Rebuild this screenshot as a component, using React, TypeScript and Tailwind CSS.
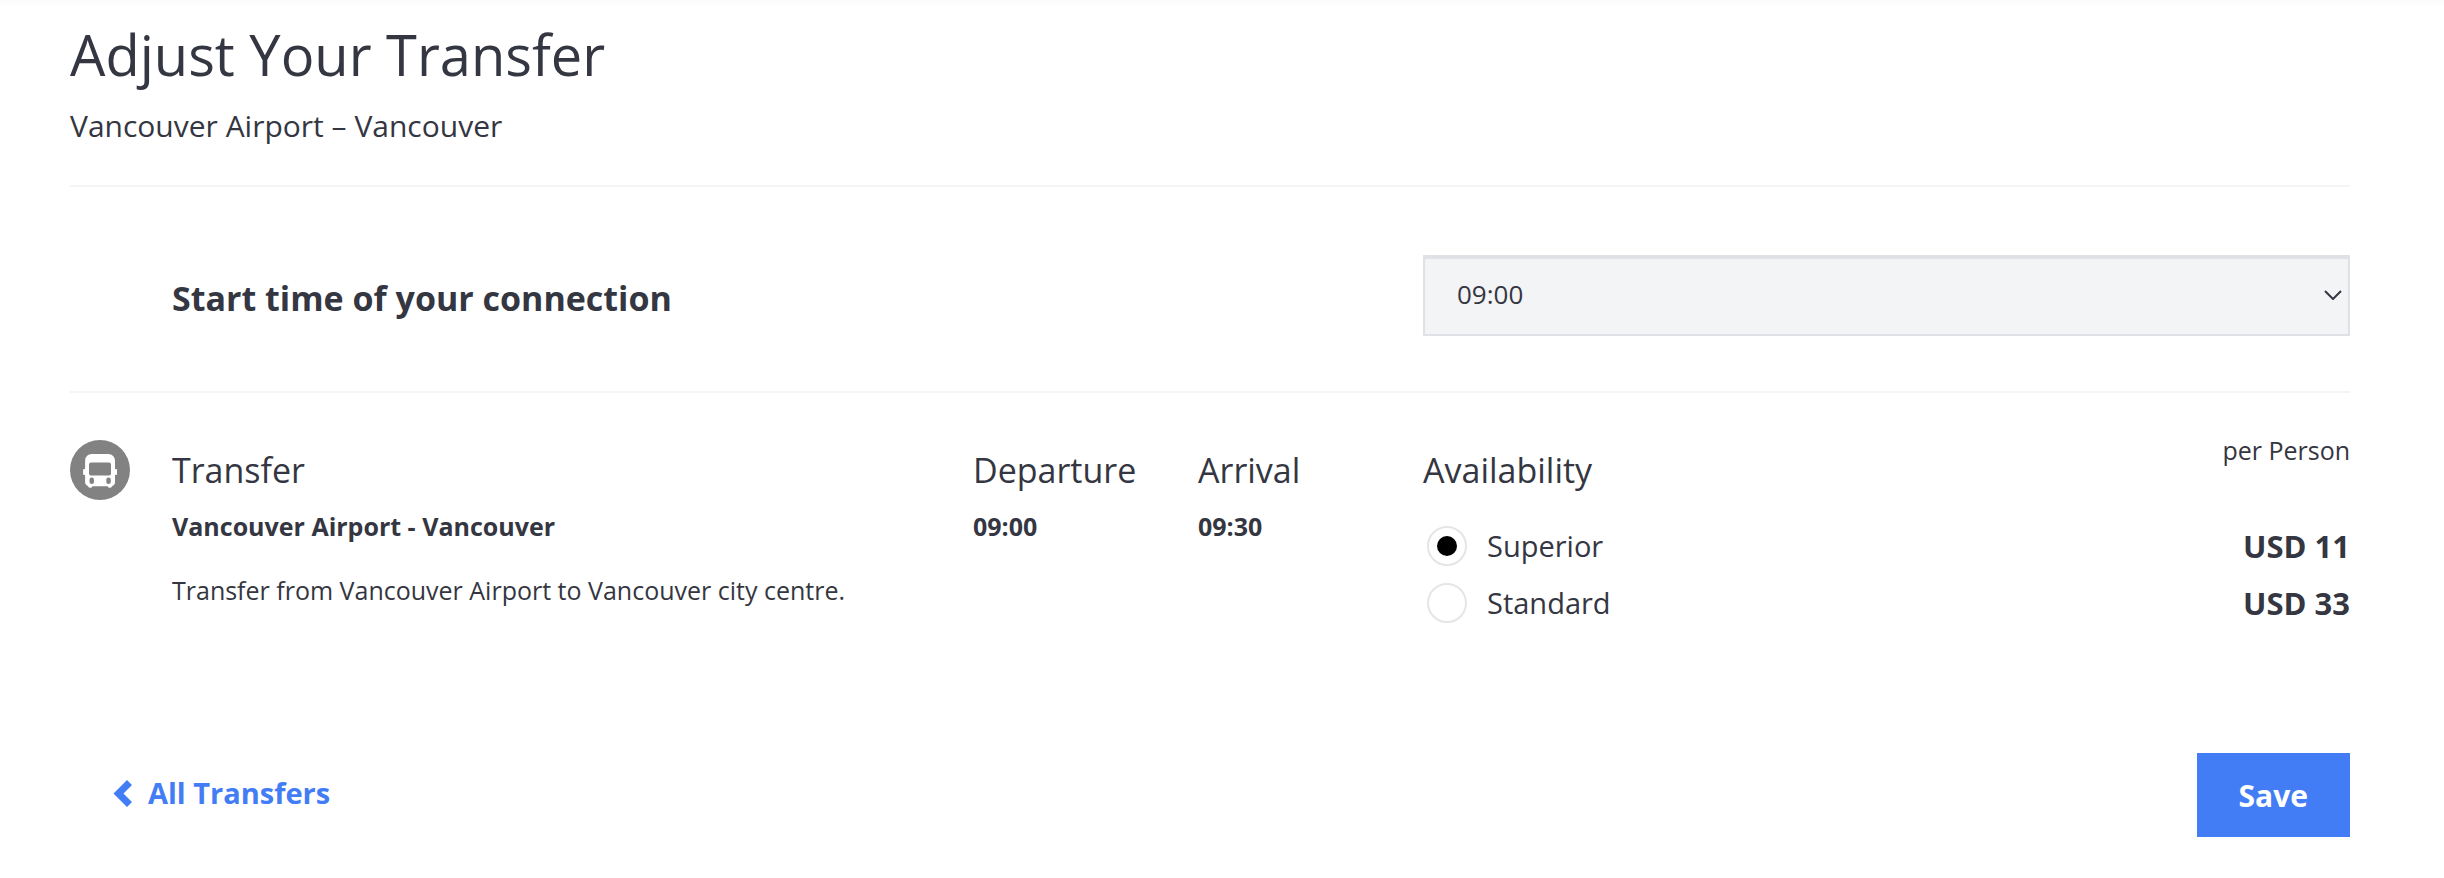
import { useState } from "react";

const ROW = "grid grid-cols-[102px_801fr_225fr_225fr_927fr]";
const HEADING = "mt-4 text-[34px] leading-[44px]";
const DETAIL = "mt-4 text-[25px] leading-9 font-bold";

const classes = [
  { id: "superior", name: "Superior", price: "USD 11" },
  { id: "standard", name: "Standard", price: "USD 33" },
];

function BusIcon() {
  return (
    <svg viewBox="0 0 60 60" className="mt-2 size-[60px]" role="img" aria-label="Bus">
      <circle cx="30" cy="30" r="30" fill="#828282" />
      <path
        fill="#fff"
        d="M22 14h16.500a6.500 6.500 0 0 1 6.500 6.500V29h1a1 1 0 0 1 1 1v4a1 1 0 0 1-1 1h-1v7c0 2-1 3.500-3 4.200a2.300 2.300 0 0 1-4.400 0H22.500a2.300 2.300 0 0 1-4.400 0c-2-.700-3-2.200-3-4.200v-7h-1a1 1 0 0 1-1-1v-4a1 1 0 0 1 1-1h1v-8.500A6.500 6.500 0 0 1 22 14z"
      />
      <rect x="19" y="22.500" width="22" height="13" rx="2" fill="#828282" />
      <rect x="19.500" y="37.500" width="4.500" height="6.500" rx="2.200" fill="#828282" />
      <rect x="36.300" y="37.500" width="4.500" height="6.500" rx="2.200" fill="#828282" />
    </svg>
  );
}

export default function App() {
  const [selected, setSelected] = useState("superior");

  return (
    <main className="bg-white bg-linear-to-b from-[#fbfbfb] to-white to-[8px] pt-[18px] pr-[94px] pb-10 pl-[70px] font-['Open_Sans',sans-serif] text-[#343641]">
      <header className="border-b-2 border-[#f4f4f5] pb-[39px]">
        <h1 className="text-[56px] leading-[72px]">Adjust Your Transfer</h1>
        <p className="mt-4 text-[30px] leading-10">Vancouver Airport – Vancouver</p>
      </header>

      <section className={`${ROW} items-center border-b-2 border-[#f4f4f5] pt-[68px] pb-[55px]`}>
        <label htmlFor="start-time" className="col-span-3 col-start-2 pt-1 text-[34px] leading-[44px] font-bold">
          Start time of your connection
        </label>
        <div className="relative col-start-5">
          <select
            id="start-time"
            defaultValue="09:00"
            className="block h-[81px] w-full appearance-none rounded-none border-2 border-[#e0e1e6] bg-[#f3f4f6] pr-12 pb-0.5 pl-8 text-[26px] shadow-[inset_0_2px_1px_#e0e1e6]"
          >
            <option>09:00</option>
            <option>09:30</option>
            <option>10:00</option>
          </select>
          <svg
            viewBox="0 0 18 10"
            className="pointer-events-none absolute top-[35px] right-2 h-[10px] w-[18px]"
            fill="none"
            stroke="#343641"
            strokeWidth="2"
            aria-hidden="true"
          >
            <path d="M1 1l8 8 8-8" />
          </svg>
        </div>
      </section>

      <section className={`${ROW} pt-[39px]`}>
        <BusIcon />
        <div>
          <h2 className={HEADING}>Transfer</h2>
          <p className={DETAIL}>Vancouver Airport - Vancouver</p>
          <p className="mt-7 text-[25px] leading-9">Transfer from Vancouver Airport to Vancouver city centre.</p>
        </div>
        <div>
          <h2 className={HEADING}>Departure</h2>
          <p className={DETAIL}>09:00</p>
        </div>
        <div>
          <h2 className={HEADING}>Arrival</h2>
          <p className={DETAIL}>09:30</p>
        </div>
        <fieldset>
          <div className="flex items-start justify-between">
            <h2 className={HEADING}>Availability</h2>
            <span className="text-[25px] leading-9">per Person</span>
          </div>
          <div className="mt-[34px] flex flex-col gap-[17px]">
            {classes.map((c) => (
              <label key={c.id} className="flex items-center text-[29px] leading-10">
                <input
                  type="radio"
                  name="class"
                  value={c.id}
                  checked={selected === c.id}
                  onChange={() => setSelected(c.id)}
                  className="mr-5 ml-1 grid size-10 shrink-0 appearance-none place-items-center rounded-full border-2 border-[#e5e5e5] bg-white before:size-5 before:rounded-full checked:before:bg-black"
                />
                {c.name}
                <span className="ml-auto text-[31px] font-bold">{c.price}</span>
              </label>
            ))}
          </div>
        </fieldset>
      </section>

      <footer className="mt-[130px] flex items-center justify-between">
        <a href="#transfers" className="mb-1 ml-[43px] flex items-center gap-4 text-[29px] leading-10 font-bold text-[#427df6]">
          <svg viewBox="0 0 19 27" className="h-[27px] w-[19px]" fill="currentColor" aria-hidden="true">
            <path d="M14 0l5 5-8.500 8.500L19 22l-5 5L.500 13.500z" />
          </svg>
          All Transfers
        </a>
        <button type="button" className="h-[84px] bg-[#427df6] px-[42px] text-[30px] font-bold text-white">
          Save
        </button>
      </footer>
    </main>
  );
}
